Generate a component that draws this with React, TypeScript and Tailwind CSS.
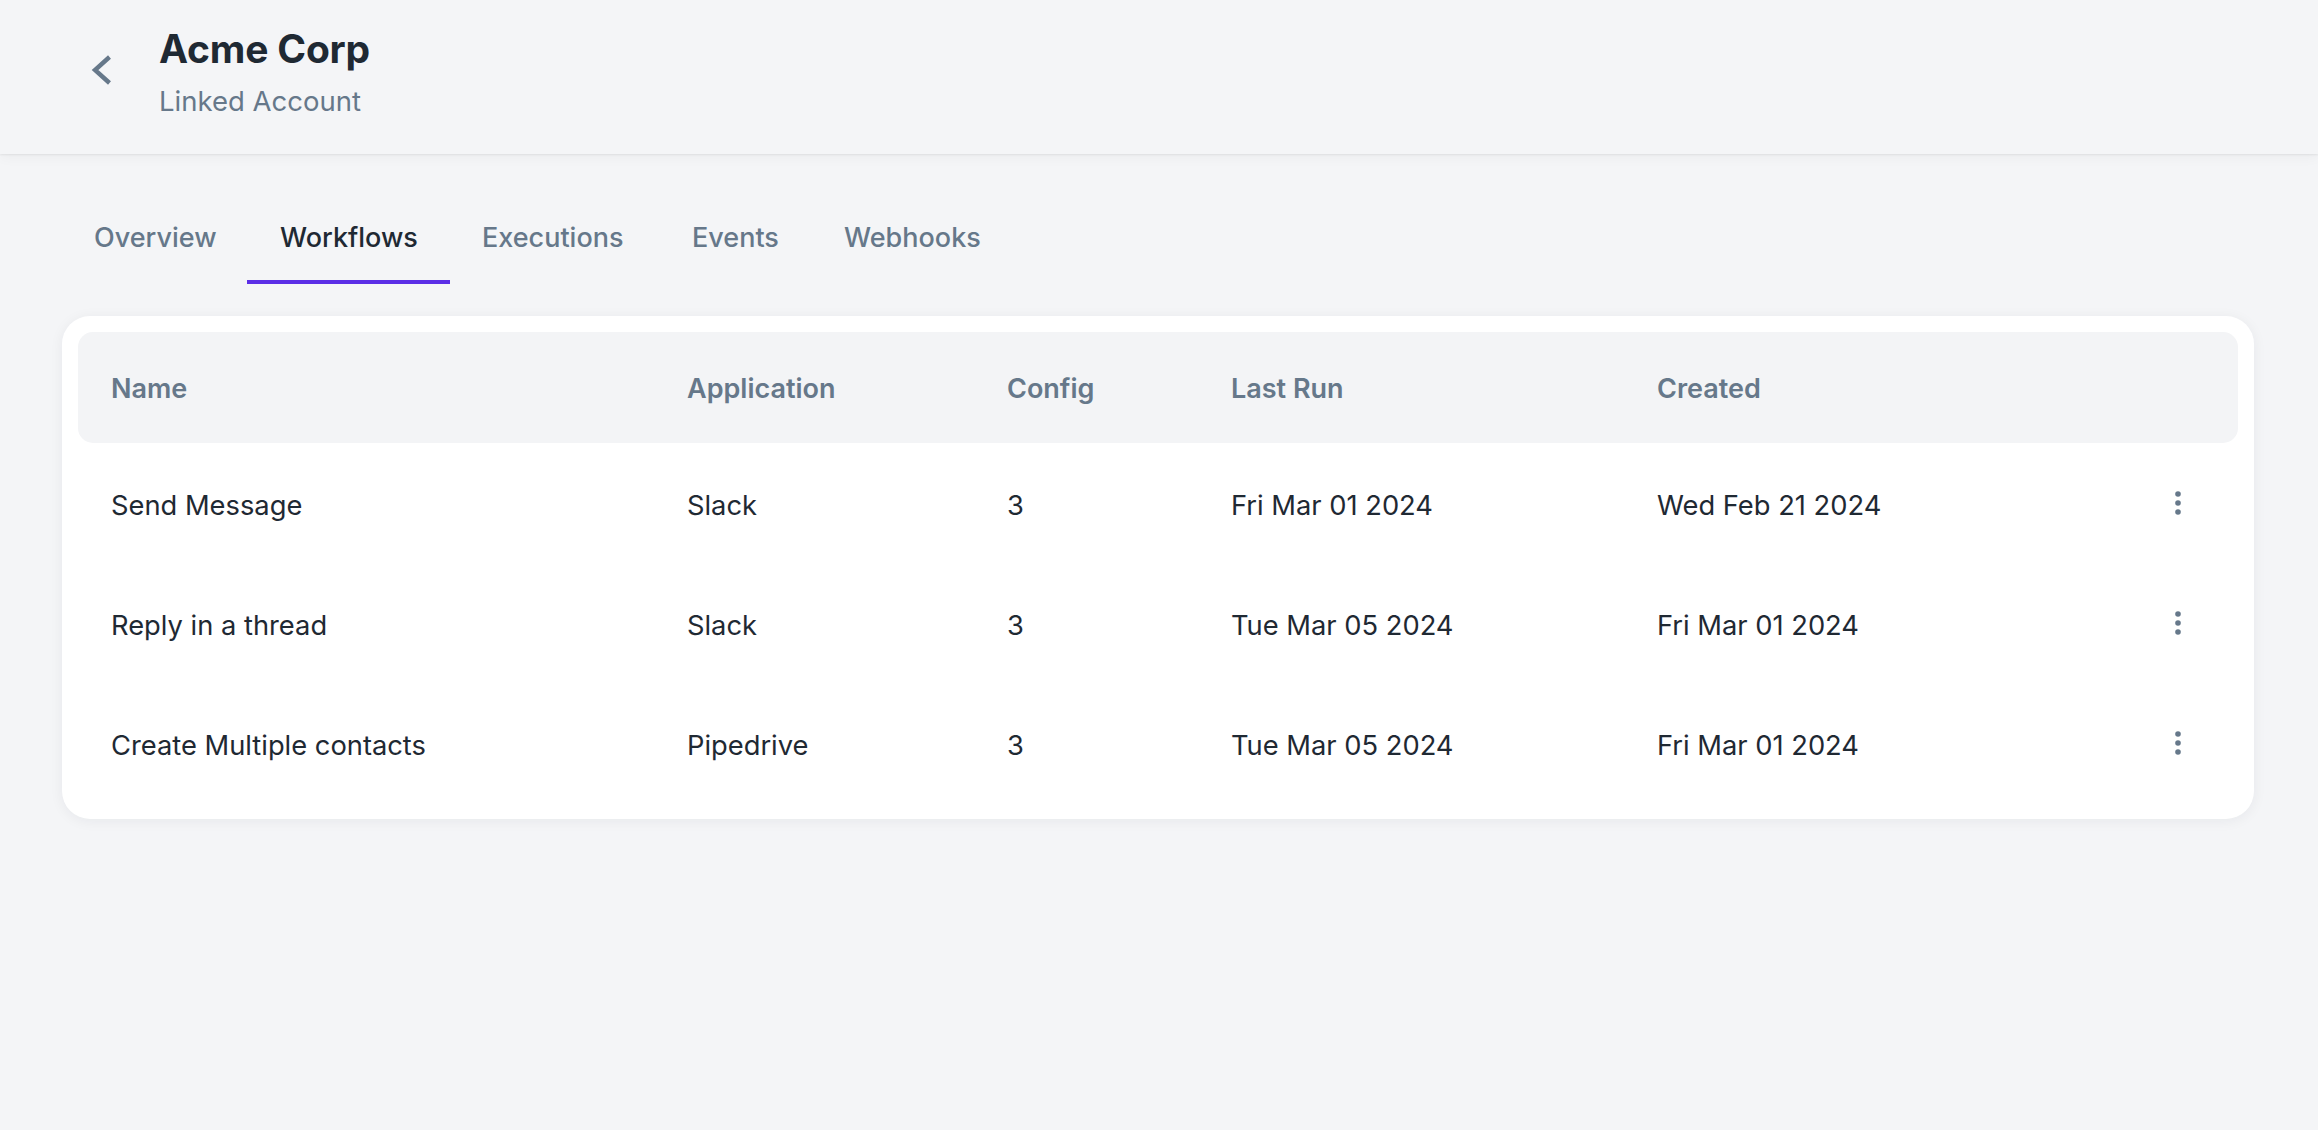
import React from "react";

const rows = [
  { name: "Send Message", app: "Slack", config: "3", lastRun: "Fri Mar 01 2024", created: "Wed Feb 21 2024" },
  { name: "Reply in a thread", app: "Slack", config: "3", lastRun: "Tue Mar 05 2024", created: "Fri Mar 01 2024" },
  { name: "Create Multiple contacts", app: "Pipedrive", config: "3", lastRun: "Tue Mar 05 2024", created: "Fri Mar 01 2024" },
];

const tabs = [
  { label: "Overview", w: "w-[185px]" },
  { label: "Workflows", w: "w-[203px]" },
  { label: "Executions", w: "w-[210px]" },
  { label: "Events", w: "w-[152px]" },
  { label: "Webhooks", w: "w-[202px]" },
];

function Kebab() {
  return (
    <svg width="8" height="26" viewBox="0 0 8 26" aria-hidden="true">
      <circle cx="4" cy="4" r="2.8" fill="#66788a" />
      <circle cx="4" cy="13" r="2.8" fill="#66788a" />
      <circle cx="4" cy="22" r="2.8" fill="#66788a" />
    </svg>
  );
}

export default function App() {
  const grid = "grid grid-cols-[576px_320px_224px_426px_1fr_52px] items-center pl-[33px] pr-[34px]";
  return (
    <div className="min-h-screen bg-[#f4f5f7] font-['Inter',sans-serif] text-[#1f2933]">
      <header className="h-[154px] bg-[#f4f5f7] flex items-start pt-[25px] pl-[90px] shadow-[0_1px_2px_rgba(0,0,0,0.07),0_4px_12px_rgba(0,0,0,0.035)] relative">
        <button className="mt-[29px] w-[24px] h-[32px] flex items-center justify-center" aria-label="Back">
          <svg width="24" height="32" viewBox="0 0 24 32" fill="none">
            <path d="M19.5 3 L5 16 L19.5 29" stroke="#66788a" strokeWidth="4.4" strokeLinejoin="miter" />
          </svg>
        </button>
        <div className="ml-[45px] flex flex-col gap-[8px]">
          <h1 className="text-[39px] leading-[48px] font-bold tracking-[-0.2px] text-[#1f2933]">Acme Corp</h1>
          <p className="text-[27.5px] leading-[40px] text-[#66788a]">Linked Account</p>
        </div>
      </header>

      <main className="pl-[62px] pr-[64px]">
        <nav className="mt-[34px] flex">
          {tabs.map((t) => {
            const active = t.label === "Workflows";
            return (
              <div
                key={t.label}
                className={
                  active
                    ? `${t.w} pl-[33px] pt-[30px] pb-[22px] border-b-[4px] border-[#5b2ee6] text-[27px] leading-[40px] font-medium text-[#1f2933] whitespace-nowrap`
                    : `${t.w} pl-[32px] pt-[30px] pb-[22px] border-b-[4px] border-transparent text-[27px] leading-[40px] font-medium text-[#66788a] whitespace-nowrap`
                }
              >
                {t.label}
              </div>
            );
          })}
        </nav>

        <section className="mt-[32px] bg-white rounded-[28px] p-[16px] shadow-[0_2px_14px_rgba(20,30,50,0.06)]">
          <div className={`${grid} h-[111px] pt-[3px] bg-[#f3f4f6] rounded-[15px] text-[27px] font-semibold text-[#66788a]`}>
            <div>Name</div>
            <div>Application</div>
            <div>Config</div>
            <div>Last Run</div>
            <div>Created</div>
            <div />
          </div>
          {rows.map((r) => (
            <div key={r.name} className={`${grid} h-[120px] text-[27.3px] text-[#1f2933]`}>
              <div className="pt-[6px]">{r.name}</div>
              <div className="pt-[6px]">{r.app}</div>
              <div className="pt-[6px]">{r.config}</div>
              <div className="pt-[6px]">{r.lastRun}</div>
              <div className="pt-[6px]">{r.created}</div>
              <div className="flex justify-center">
                <button className="w-[52px] h-[52px] flex items-center justify-center" aria-label="More">
                  <Kebab />
                </button>
              </div>
            </div>
          ))}
        </section>
      </main>
    </div>
  );
}
